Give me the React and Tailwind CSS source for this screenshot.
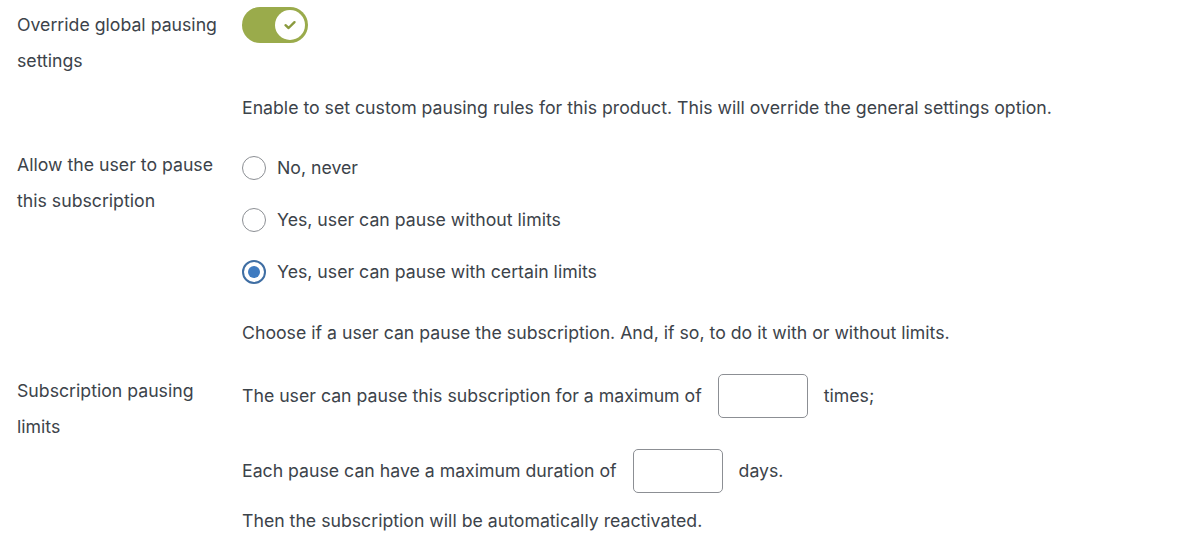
import React from 'react';

const font = { fontFamily: 'Inter, "Noto Sans", sans-serif' };

const Radio = ({ checked, label }) => (
    <label className="flex items-center gap-[11px] h-[52px]">
        <span className={`w-[24px] h-[24px] rounded-full flex items-center justify-center bg-white ${checked ? 'border-2 border-[#3f6ea3]' : 'border border-[#8c8f94]'}`}>
            {checked && <span className="w-[12px] h-[12px] rounded-full bg-[#3f7bc0]" />}
        </span>
        <span>{label}</span>
    </label>
);

const App = () => {
    return (
        <div className="w-[1184px] h-[554px] bg-white text-[#3c434a] text-[17.7px] leading-[36px] overflow-hidden" style={font}>
            {/* Override */}
            <div className="flex pl-[17px] pt-[7px]">
                <div className="w-[225px]">Override global pausing<br />settings</div>
                <div className="flex-1">
                    <div className="w-[66px] h-[36px] rounded-full bg-[#9aab4b] flex items-center justify-end pr-[3px]">
                        <div className="w-[30px] h-[30px] rounded-full bg-white flex items-center justify-center">
                            <svg width="14" height="12" viewBox="0 0 14 12" fill="none">
                                <path d="M2.5 6.2 L5.6 9 L11.5 3.2" stroke="#8a9a3e" strokeWidth="2.4" strokeLinecap="round" strokeLinejoin="round" />
                            </svg>
                        </div>
                    </div>
                    <p className="mt-[47px]">Enable to set custom pausing rules for this product. This will override the general settings option.</p>
                </div>
            </div>

            {/* Allow pause */}
            <div className="flex pl-[17px] mt-[21px]">
                <div className="w-[225px]">Allow the user to pause<br />this subscription</div>
                <div className="flex-1 -mt-[5px]">
                    <Radio label="No, never" />
                    <Radio label="Yes, user can pause without limits" />
                    <Radio checked label="Yes, user can pause with certain limits" />
                    <p className="mt-[17px]">Choose if a user can pause the subscription. And, if so, to do it with or without limits.</p>
                </div>
            </div>

            {/* Limits */}
            <div className="flex pl-[17px] mt-[22px]">
                <div className="w-[225px]">Subscription pausing<br />limits</div>
                <div className="flex-1 mt-[1px]">
                    <div className="flex items-center gap-[16px] h-[44px]">
                        <span>The user can pause this subscription for a maximum of</span>
                        <input className="w-[90px] h-[44px] rounded-[5px] border border-[#8c8f94] bg-white" />
                        <span>times;</span>
                    </div>
                    <div className="flex items-center gap-[16px] h-[44px] mt-[31px]">
                        <span>Each pause can have a maximum duration of</span>
                        <input className="w-[90px] h-[44px] rounded-[5px] border border-[#8c8f94] bg-white" />
                        <span>days.</span>
                    </div>
                    <p className="mt-[10px]">Then the subscription will be automatically reactivated.</p>
                </div>
            </div>
        </div>
    );
};

export default App;
